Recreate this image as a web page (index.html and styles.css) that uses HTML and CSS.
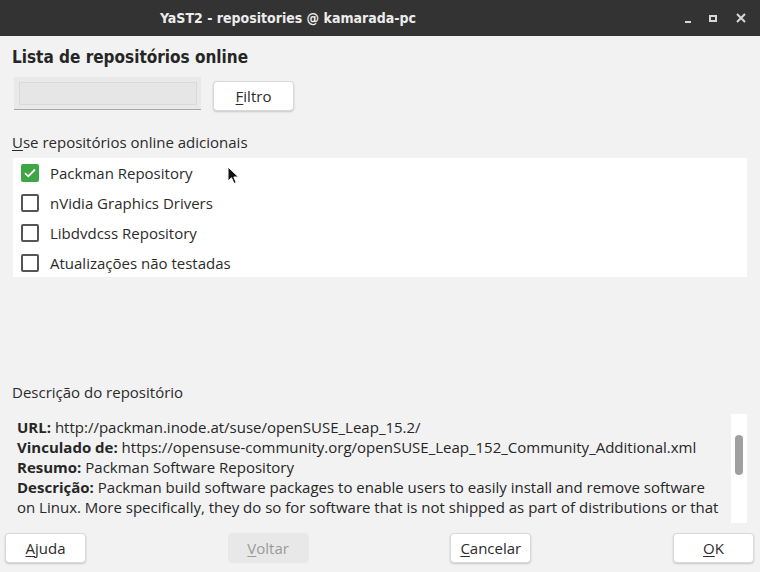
FILE: index.html
```html
<!DOCTYPE html>
<html lang="pt">
<head>
<meta charset="utf-8">
<title>YaST2 - repositories @ kamarada-pc</title>
<link rel="stylesheet" href="styles.css">
</head>
<body>
<div class="window">
  <header class="titlebar">
    <span class="title">YaST2 - repositories @ kamarada-pc</span>
    <div class="controls">
      <span class="ctl ctl-min"></span>
      <span class="ctl ctl-max"></span>
      <svg class="ctl-close" width="10" height="10" viewBox="0 0 10 10"><path d="M1 1L9 9M9 1L1 9" stroke="#d8d8d8" stroke-width="2"/></svg>
    </div>
  </header>

  <main class="content">
    <h1 class="heading">Lista de repositórios online</h1>

    <div class="filter-row">
      <div class="search"><div class="search-inner"></div></div>
      <button class="btn btn-filter"><u>F</u>iltro</button>
    </div>

    <div class="label"><u>U</u>se repositórios online adicionais</div>

    <div class="list">
      <div class="row">
        <span class="cb checked"><svg width="12" height="10" viewBox="0 0 12 10"><path d="M1 5.2L4.3 8.3L11 1.5" fill="none" stroke="#fff" stroke-width="1.8"/></svg></span>
        <span>Packman Repository</span>
      </div>
      <div class="row"><span class="cb"></span><span>nVidia Graphics Drivers</span></div>
      <div class="row"><span class="cb"></span><span>Libdvdcss Repository</span></div>
      <div class="row"><span class="cb"></span><span>Atualizações não testadas</span></div>
      <svg class="cursor" width="14" height="20" viewBox="0 0 14 20"><path d="M1 1L1 15L4.5 11.8L7 17.5L9.2 16.5L6.8 11L11.5 11Z" fill="#111" stroke="#fff" stroke-width="1"/></svg>
    </div>

    <div class="spacer"></div>

    <div class="label desc-label">Descrição do repositório</div>

    <div class="desc">
      <div class="desc-text">
        <div><b>URL:</b> http://packman.inode.at/suse/openSUSE_Leap_15.2/</div>
        <div><b>Vinculado de:</b> https://opensuse-community.org/openSUSE_Leap_152_Community_Additional.xml</div>
        <div><b>Resumo:</b> Packman Software Repository</div>
        <div><b>Descrição:</b> Packman build software packages to enable users to easily install and remove software on Linux. More specifically, they do so for software that is not shipped as part of distributions or that cannot be shipped for legal reasons.</div>
      </div>
      <div class="scrollbar"><div class="thumb"></div></div>
    </div>
  </main>

  <footer class="buttons">
    <button class="btn"><u>A</u>juda</button>
    <button class="btn btn-disabled"><u>V</u>oltar</button>
    <button class="btn"><u>C</u>ancelar</button>
    <button class="btn btn-ok"><u>O</u>K</button>
  </footer>
</div>
</body>
</html>
```

FILE: styles.css
```css
* { box-sizing: border-box; }

html, body {
  margin: 0;
  padding: 0;
}

body {
  width: 760px;
  height: 572px;
  overflow: hidden;
  background: #f2f2f2;
  font-family: "Open Sans", "Noto Sans", sans-serif;
  font-size: 15px;
  color: #2b2b2b;
}

.window {
  display: flex;
  flex-direction: column;
  height: 572px;
}

.titlebar {
  height: 36px;
  flex: none;
  background: #333333;
  display: flex;
  align-items: center;
  position: relative;
}

.title {
  margin-left: 160px;
  color: #ececec;
  font-family: "Liberation Sans Narrow", "DejaVu Sans Condensed", sans-serif;
  font-weight: bold;
  font-size: 14px;
}

.controls {
  margin-left: auto;
  margin-right: 14px;
  display: flex;
  align-items: center;
}

.ctl-min {
  width: 6px;
  height: 2px;
  background: #d8d8d8;
  margin-top: 8px;
  margin-right: 18px;
}

.ctl-max {
  width: 8px;
  height: 7px;
  border: 2px solid #d8d8d8;
  margin-right: 19px;
}

.ctl-close {
  display: block;
}

.content {
  flex: 1;
  display: flex;
  flex-direction: column;
  padding: 0 13px 0 12px;
  min-height: 0;
}

.heading {
  margin: 10px 0 0 0;
  height: 31px;
  font-family: "Liberation Sans Narrow", "DejaVu Sans Condensed", sans-serif;
  font-weight: bold;
  font-size: 17px;
  line-height: 22px;
  color: #262626;
}

.filter-row {
  display: flex;
  align-items: flex-start;
  gap: 12px;
  margin-left: 2px;
}

.search {
  width: 187px;
  height: 33px;
  background: #e9e9e9;
  border-bottom: 1px solid #a8a8a8;
  padding: 5px 4px 4px 5px;
}

.search-inner {
  height: 23px;
  background: #e6e6e6;
  border: 1px solid #dadada;
}

.btn {
  font-family: "Open Sans", "Noto Sans", sans-serif;
  font-size: 15px;
  color: #2b2b2b;
  width: 81px;
  height: 30px;
  background: #ffffff;
  border: 1px solid #d9d9d9;
  border-radius: 4px;
  box-shadow: 0 1px 2px rgba(0, 0, 0, 0.18);
  padding: 0;
}

.btn-filter {
  margin-top: 4px;
}

.btn u {
  text-underline-offset: 2px;
}

.label {
  margin-top: 21px;
  font-size: 15px;
  line-height: 20px;
  color: #2b2b2b;
}

.label u {
  text-underline-offset: 2px;
}

.list {
  position: relative;
  margin-top: 6px;
  margin-left: 1px;
  background: #ffffff;
  height: 119px;
}

.row {
  display: flex;
  align-items: center;
  height: 30px;
  padding-left: 8px;
  gap: 11px;
  font-size: 15px;
}

.cb {
  width: 18px;
  height: 18px;
  border: 2px solid #555555;
  border-radius: 2px;
  flex: none;
  display: flex;
  align-items: center;
  justify-content: center;
}

.cb.checked {
  background: #3ea645;
  border-color: #3ea645;
}

.cursor {
  position: absolute;
  left: 214px;
  top: 8px;
}

.spacer {
  flex: 1;
}

.desc-label {
  margin-top: 0;
  margin-bottom: 10px;
}

.desc {
  display: flex;
  height: 111px;
  margin-bottom: 10px;
}

.desc-text {
  flex: 1;
  overflow: hidden;
  margin-bottom: 4px;
  padding: 5px 6px 0 5px;
  font-size: 15px;
  line-height: 20px;
  color: #262626;
}

.desc-text b {
  font-weight: bold;
}

.scrollbar {
  width: 16px;
  flex: none;
  background: #ffffff;
  margin-top: 2px;
  padding: 21px 4px 0 4px;
}

.thumb {
  height: 40px;
  background: #a0a0a0;
  border-radius: 4px;
}

.buttons {
  flex: none;
  height: 39px;
  display: flex;
  justify-content: space-between;
  padding: 0 6px 0 5px;
  align-items: flex-start;
}

.btn-disabled {
  background: #e8e8e8;
  border-color: #e8e8e8;
  color: #9a9a9a;
  box-shadow: none;
}
```
